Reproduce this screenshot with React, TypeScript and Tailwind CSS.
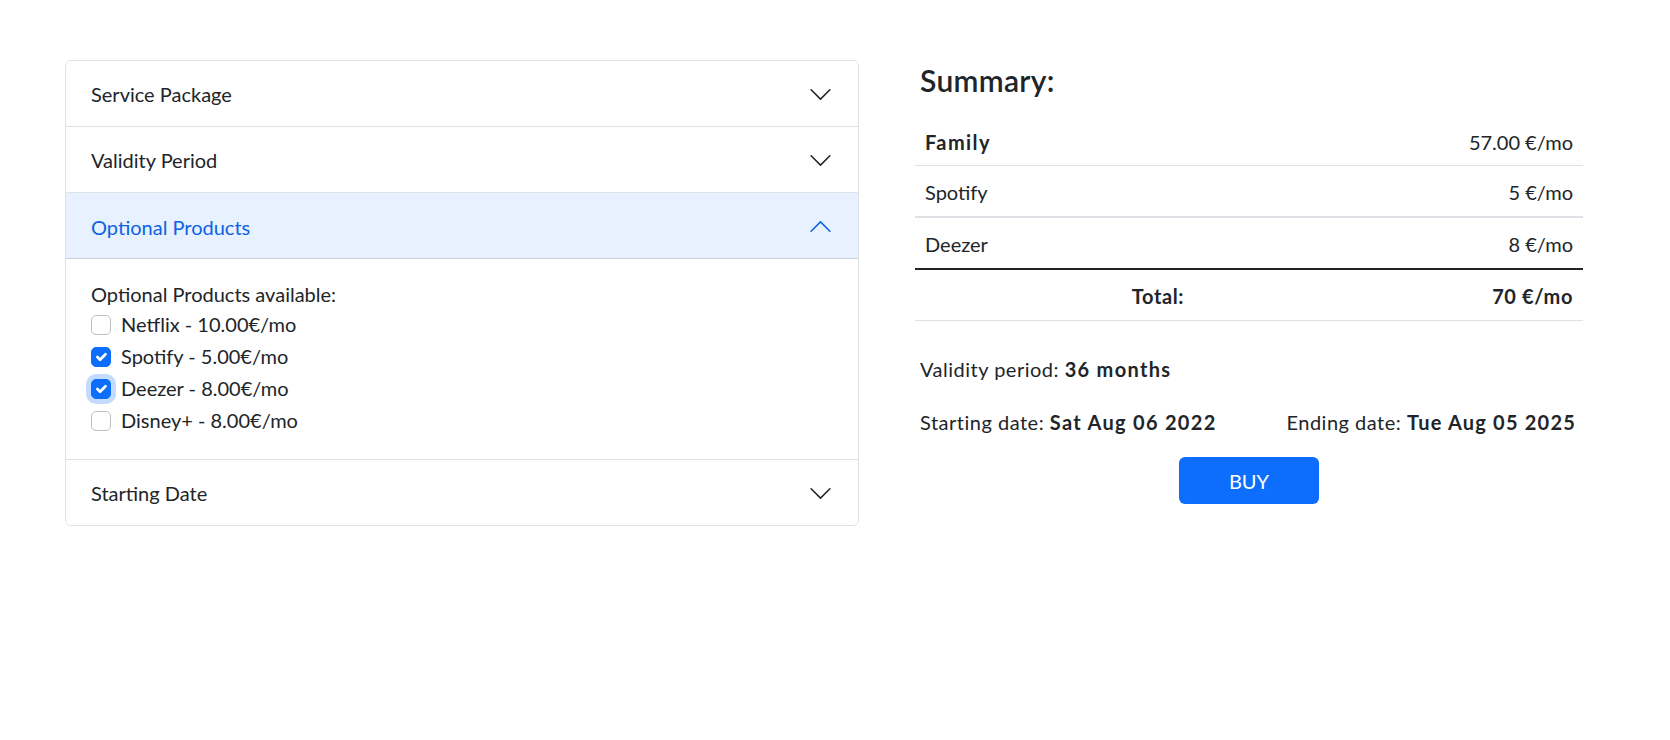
import { useState } from "react";

const font = { fontFamily: "Lato, 'Noto Sans', 'Liberation Sans', sans-serif" };

function Chevron({ open }: { open: boolean }) {
  return (
    <svg
      viewBox="0 0 16 16"
      className={open ? "w-[25px] h-[25px] rotate-180 text-[#0c63e4]" : "w-[25px] h-[25px] text-[#212529]"}
      fill="currentColor"
    >
      <path
        fillRule="evenodd"
        d="M1.646 4.646a.5.5 0 0 1 .708 0L8 10.293l5.646-5.647a.5.5 0 0 1 .708.708l-6 6a.5.5 0 0 1-.708 0l-6-6a.5.5 0 0 1 0-.708z"
      />
    </svg>
  );
}

function Check({ checked, focused }: { checked: boolean; focused?: boolean }) {
  return (
    <span
      className={
        "mt-[6px] flex h-[20px] w-[20px] shrink-0 items-center justify-center rounded-[5px] border " +
        (checked ? "border-[#0d6efd] bg-[#0d6efd] " : "border-[#bfbfbf] bg-white ") +
        (focused ? "shadow-[0_0_0_5px_rgba(13,110,253,0.25)]" : "")
      }
    >
      {checked && (
        <svg viewBox="0 0 20 20" className="h-[20px] w-[20px]">
          <path d="m6 10 3 3 6-6" fill="none" stroke="#fff" strokeWidth="3" strokeLinecap="round" strokeLinejoin="round" />
        </svg>
      )}
    </span>
  );
}

const products = [
  { name: "Netflix", price: "10.00", checked: false },
  { name: "Spotify", price: "5.00", checked: true },
  { name: "Deezer", price: "8.00", checked: true, focused: true },
  { name: "Disney+", price: "8.00", checked: false },
];

export default function App() {
  const [open, setOpen] = useState("optional");
  const sections = [
    { id: "package", title: "Service Package" },
    { id: "validity", title: "Validity Period" },
    { id: "optional", title: "Optional Products" },
    { id: "start", title: "Starting Date" },
  ];

  return (
    <div className="flex min-h-[740px] bg-white pl-[65px] pt-[60px] text-[20px] leading-[30px] text-[#212529]" style={font}>
      <div className="w-[794px] self-start overflow-hidden rounded-[6px] border border-[#dee2e6]">
        {sections.map((s, i) => {
          const isOpen = open === s.id;
          return (
            <div key={s.id} className={i > 0 ? "border-t border-[#dee2e6]" : ""}>
              <button
                onClick={() => setOpen(isOpen ? "" : s.id)}
                className={
                  "flex w-full items-center justify-between px-[25px] text-left " +
                  (isOpen
                    ? "h-[66px] bg-[#e7f1ff] pt-px text-[#0c63e4] shadow-[inset_0_-1px_0_rgba(0,0,0,0.125)]"
                    : "h-[65px] bg-white pt-px")
                }
              >
                <span>{s.title}</span>
                <Chevron open={isOpen} />
              </button>
              {isOpen && s.id === "optional" && (
                <div className="px-[25px] pb-[22px] pt-[20px]">
                  <div>Optional Products available:</div>
                  {products.map((p) => (
                    <label key={p.name} className="mb-[2px] flex min-h-[30px] gap-[10px]">
                      <Check checked={p.checked} focused={p.focused} />
                      <span>
                        {p.name} - {p.price}€/mo
                      </span>
                    </label>
                  ))}
                </div>
              )}
            </div>
          );
        })}
      </div>

      <div className="ml-[56px] w-[668px]">
        <h3 className="mt-[2px] pl-[5px] text-[30px] font-semibold leading-[36px] tracking-[0.3px]">Summary:</h3>
        <table className="mt-[17px] w-full border-collapse">
          <tbody>
            <tr className="border-b border-[#dee2e6]">
              <td className="w-[279px] px-[10px] pb-[8px] pt-[12px] font-bold tracking-[1.4px]">Family</td>
              <td className="px-[10px] pb-[8px] pt-[12px] text-right">57.00 €/mo</td>
            </tr>
            <tr className="border-b-2 border-[#dee2e6]">
              <td className="px-[10px] pb-[9px] pt-[11px]">Spotify</td>
              <td className="px-[10px] pb-[9px] pt-[11px] text-right">5 €/mo</td>
            </tr>
            <tr className="border-b-2 border-[#212529]">
              <td className="px-[10px] pb-[9px] pt-[11px]">Deezer</td>
              <td className="px-[10px] pb-[9px] pt-[11px] text-right">8 €/mo</td>
            </tr>
            <tr className="border-b border-[#dee2e6]">
              <td className="px-[10px] pb-[9px] pt-[11px] text-right font-bold tracking-[0.6px]">Total:</td>
              <td className="px-[10px] pb-[9px] pt-[11px] text-right font-bold tracking-[0.6px]">70 €/mo</td>
            </tr>
          </tbody>
        </table>
        <div className="mt-[33px] pl-[5px] tracking-[0.5px]">
          Validity period: <b className="tracking-[1.3px]">36 months</b>
        </div>
        <div className="mt-[23px] flex justify-between pl-[5px] pr-[7px] tracking-[0.5px]">
          <div>
            Starting date: <b className="tracking-[1.3px]">Sat Aug 06 2022</b>
          </div>
          <div>
            Ending date: <b className="tracking-[1.2px]">Tue Aug 05 2025</b>
          </div>
        </div>
        <div className="mt-[20px] flex justify-center">
          <button className="h-[47px] w-[140px] rounded-[6px] bg-[#0d6efd] pt-px text-white">BUY</button>
        </div>
      </div>
    </div>
  );
}
